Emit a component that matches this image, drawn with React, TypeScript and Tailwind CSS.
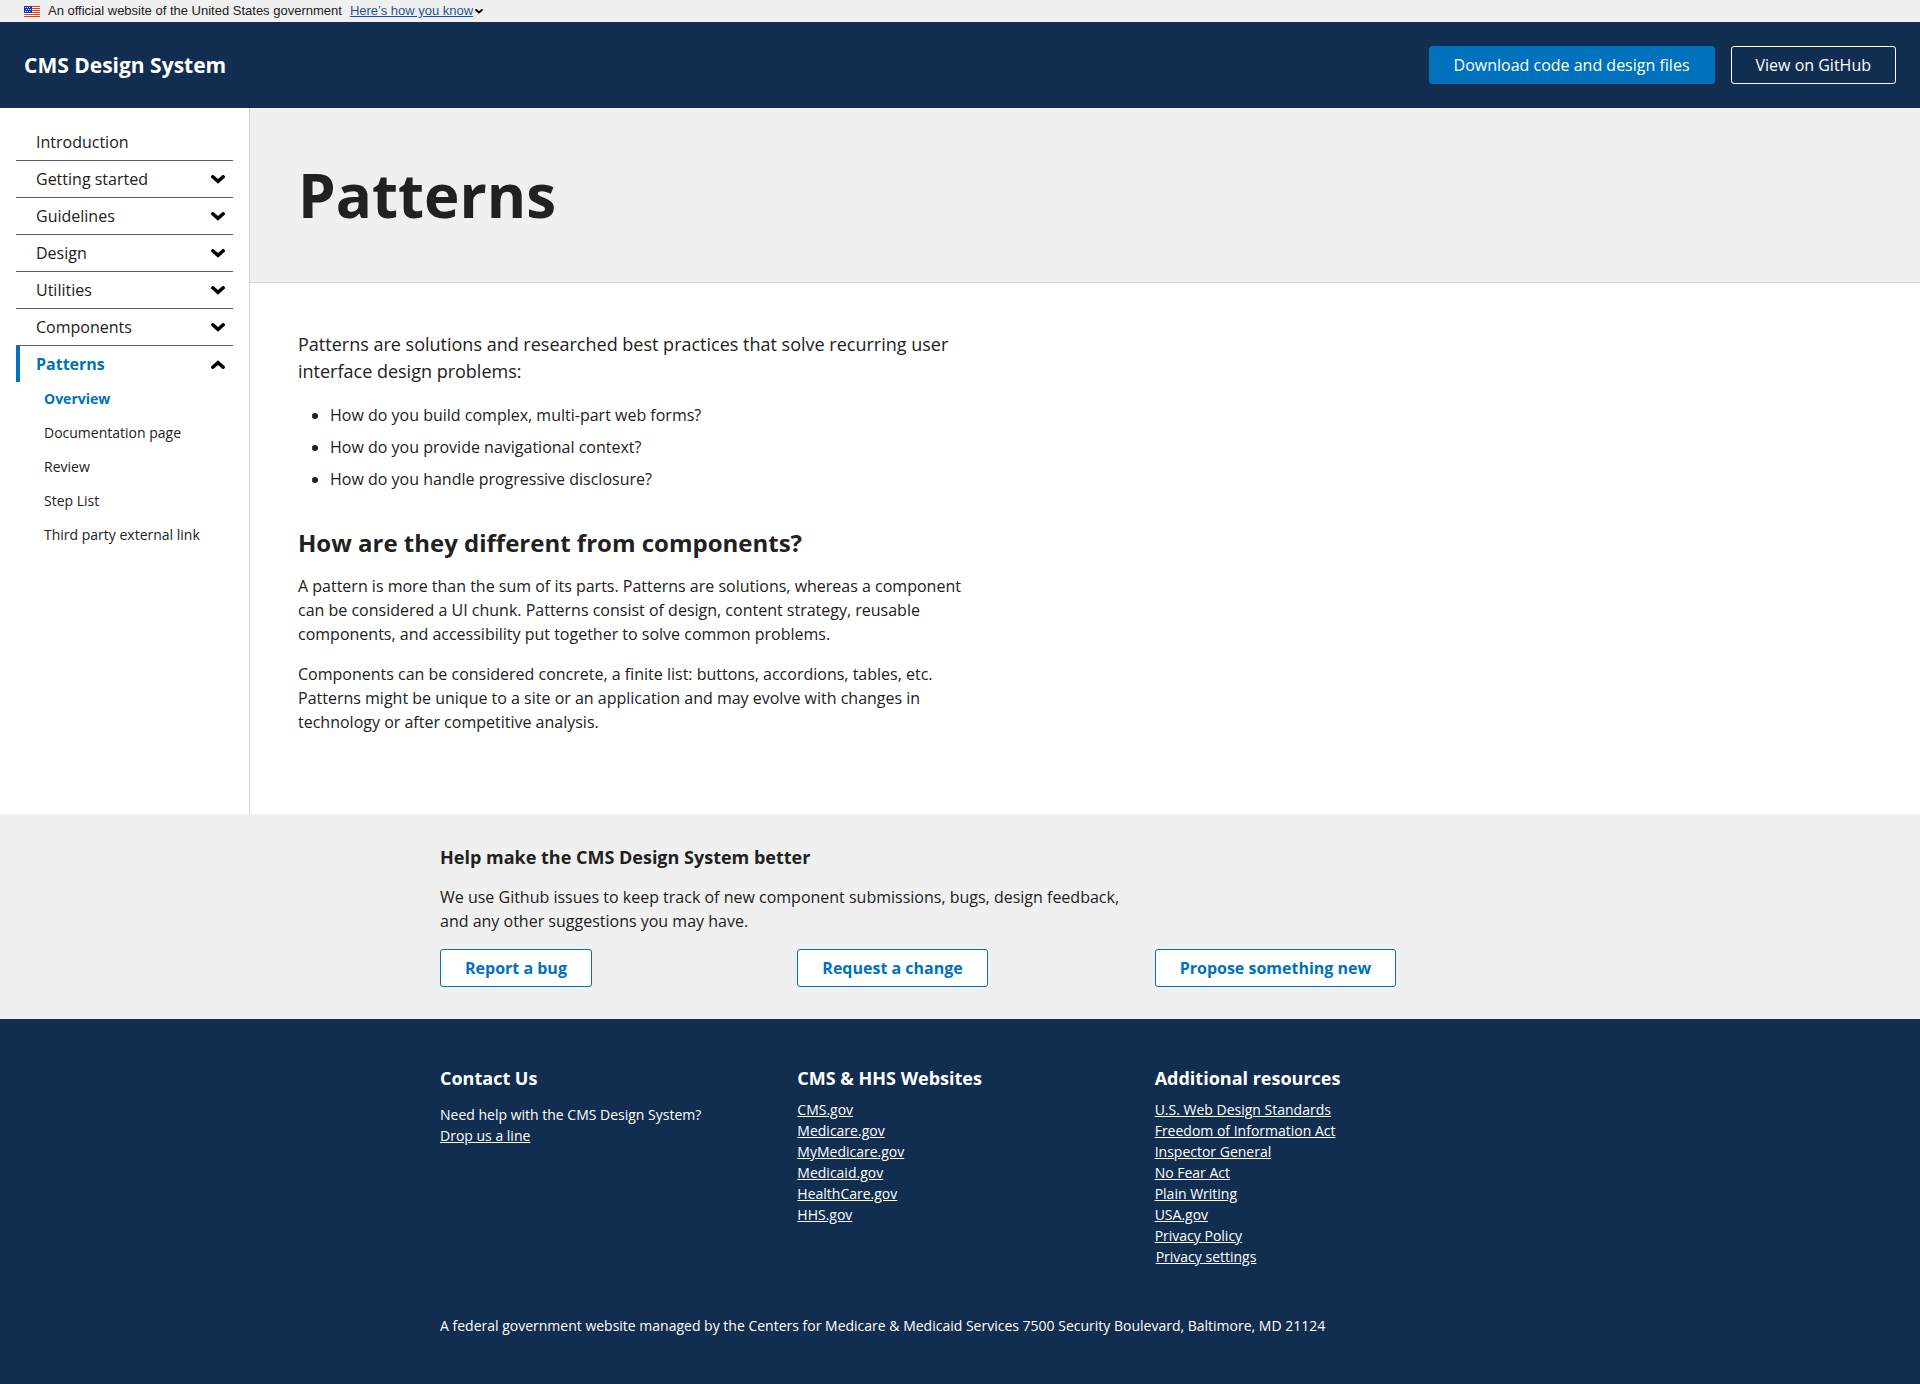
import { useState } from "react";

const sections = ["Introduction", "Getting started", "Guidelines", "Design", "Utilities", "Components"];
const patternPages = ["Overview", "Documentation page", "Review", "Step List", "Third party external link"];
const websites = ["CMS.gov", "Medicare.gov", "MyMedicare.gov", "Medicaid.gov", "HealthCare.gov", "HHS.gov"];
const resources = [
  "U.S. Web Design Standards",
  "Freedom of Information Act",
  "Inspector General",
  "No Fear Act",
  "Plain Writing",
  "USA.gov",
  "Privacy Policy",
];
const questions = [
  "How do you build complex, multi-part web forms?",
  "How do you provide navigational context?",
  "How do you handle progressive disclosure?",
];
const feedback = ["Report a bug", "Request a change", "Propose something new"];

function Chevron({ className, up = false }: { className: string; up?: boolean }) {
  return (
    <svg viewBox="0 0 14 9" className={className} fill="none" stroke="#000" strokeWidth="3.5" strokeLinecap="round" aria-hidden="true">
      <path d={up ? "M1.8 7.2 L7 2.6 L12.2 7.2" : "M1.8 1.8 L7 6.4 L12.2 1.8"} />
    </svg>
  );
}

function Flag() {
  return (
    <svg viewBox="0 0 16 11" className="h-[11px] w-4" shapeRendering="crispEdges" aria-hidden="true">
      <rect width="16" height="11" fill="#fff" />
      {[0, 2, 4, 6, 8, 10].map((y) => (
        <rect key={y} y={y} width="16" height="1" fill="#db3e1f" />
      ))}
      <rect width="8" height="7" fill="#1e33b1" />
      {[1, 3, 5].map((y) =>
        [1, 3, 5].map((x) => <rect key={`${x}-${y}`} x={y === 3 ? x + 1 : x} y={y} width="1" height="1" fill="#fff" />),
      )}
    </svg>
  );
}

export default function App() {
  const [open, setOpen] = useState(true);
  return (
    <div className="min-h-screen bg-white font-['Open_Sans',sans-serif] text-base text-[#212121]">
      <div className="flex h-[22px] items-center bg-[#f0f0f0] px-6 font-['Liberation_Sans',sans-serif] text-[13px]">
        <Flag />
        <span className="ml-2">An official website of the United States government</span>
        <button className="ml-2 flex items-center gap-0.5 text-[#1f5499]">
          <span className="underline">Here’s how you know</span>
          <Chevron className="h-[5px] w-2" />
        </button>
      </div>

      <header className="flex items-center justify-between bg-[#112e51] px-6 py-6 text-white">
        <a href="#" className="text-[21px] leading-7 font-bold">CMS Design System</a>
        <div className="flex gap-4">
          <a href="#" className="rounded-[3px] border border-[#0071bc] bg-[#0071bc] px-6 py-1.5">Download code and design files</a>
          <a href="#" className="rounded-[3px] border border-white px-6 py-1.5">View on GitHub</a>
        </div>
      </header>

      <div className="flex">
        <nav aria-label="Main" className="w-[250px] shrink-0 border-r border-[#d6d7d9] px-4 pt-4">
          <ul>
            {sections.map((s, i) => (
              <li key={s} className="border-b border-[#5b616b]">
                {i === 0 ? (
                  <a href="#" className="block py-1.5 pl-5">{s}</a>
                ) : (
                  <button className="flex w-full items-center justify-between py-1.5 pr-2 pl-5">
                    {s}
                    <Chevron className="h-[9px] w-3.5" />
                  </button>
                )}
              </li>
            ))}
            <li>
              <button
                aria-expanded={open}
                onClick={() => setOpen(!open)}
                className="flex w-full items-center justify-between border-l-4 border-[#0071bc] py-1.5 pr-2 pl-4 font-bold text-[#0071bc]"
              >
                Patterns
                <Chevron className="h-[9px] w-3.5" up={open} />
              </button>
              {open && (
                <ul className="pl-7 text-sm">
                  {patternPages.map((p) => (
                    <li key={p}>
                      <a href="#" className={p === "Overview" ? "block py-[7px] font-bold text-[#0071bc]" : "block py-[7px]"}>{p}</a>
                    </li>
                  ))}
                </ul>
              )}
            </li>
          </ul>
        </nav>

        <main className="grow">
          <div className="border-b border-[#d6d7d9] bg-[#f0f0f0] p-12">
            <h1 className="text-[60px] leading-[78px] font-bold">Patterns</h1>
          </div>
          <div className="px-12 pt-12 pb-20">
            <div className="max-w-[672px]">
              <p className="text-lg leading-[27px]">
                Patterns are solutions and researched best practices that solve recurring user interface design problems:
              </p>
              <ul className="mt-[18px] list-disc space-y-2 pl-8">
                {questions.map((q) => (
                  <li key={q}>{q}</li>
                ))}
              </ul>
              <h2 className="mt-9 text-2xl leading-[31px] font-bold">How are they different from components?</h2>
              <p className="mt-4">
                A pattern is more than the sum of its parts. Patterns are solutions, whereas a component can be considered
                a UI chunk. Patterns consist of design, content strategy, reusable components, and accessibility put
                together to solve common problems.
              </p>
              <p className="mt-4">
                Components can be considered concrete, a finite list: buttons, accordions, tables, etc. Patterns might be
                unique to a site or an application and may evolve with changes in technology or after competitive analysis.
              </p>
            </div>
          </div>
        </main>
      </div>

      <section className="bg-[#f0f0f0] py-8">
        <div className="mx-auto max-w-[1040px]">
          <h2 className="text-lg leading-[23px] font-bold">Help make the CMS Design System better</h2>
          <p className="mt-4 max-w-[688px]">
            We use Github issues to keep track of new component submissions, bugs, design feedback, and any other
            suggestions you may have.
          </p>
          <div className="mt-4 grid grid-cols-3 gap-8">
            {feedback.map((f) => (
              <div key={f} className="flex">
                <a href="#" className="rounded-[3px] border border-[#0071bc] bg-white px-6 py-1.5 font-bold text-[#0071bc]">{f}</a>
              </div>
            ))}
          </div>
        </div>
      </section>

      <footer className="bg-[#112e51] py-12 text-white">
        <div className="mx-auto max-w-[1040px] text-sm leading-[21px]">
          <div className="grid grid-cols-3 gap-8">
            <div>
              <h2 className="text-lg leading-[23px] font-bold">Contact Us</h2>
              <p className="mt-3.5">Need help with the CMS Design System?</p>
              <a href="#" className="underline">Drop us a line</a>
            </div>
            <div>
              <h2 className="mb-[9px] text-lg leading-[23px] font-bold">CMS &amp; HHS Websites</h2>
              <ul>
                {websites.map((w) => (
                  <li key={w}><a href="#" className="underline">{w}</a></li>
                ))}
              </ul>
            </div>
            <div>
              <h2 className="mb-[9px] text-lg leading-[23px] font-bold">Additional resources</h2>
              <ul>
                {resources.map((r) => (
                  <li key={r}><a href="#" className="underline">{r}</a></li>
                ))}
                <li><button className="px-px underline">Privacy settings</button></li>
              </ul>
            </div>
          </div>
          <p className="mt-12">
            A federal government website managed by the Centers for Medicare &amp; Medicaid Services 7500 Security
            Boulevard, Baltimore, MD 21124
          </p>
        </div>
      </footer>
    </div>
  );
}
